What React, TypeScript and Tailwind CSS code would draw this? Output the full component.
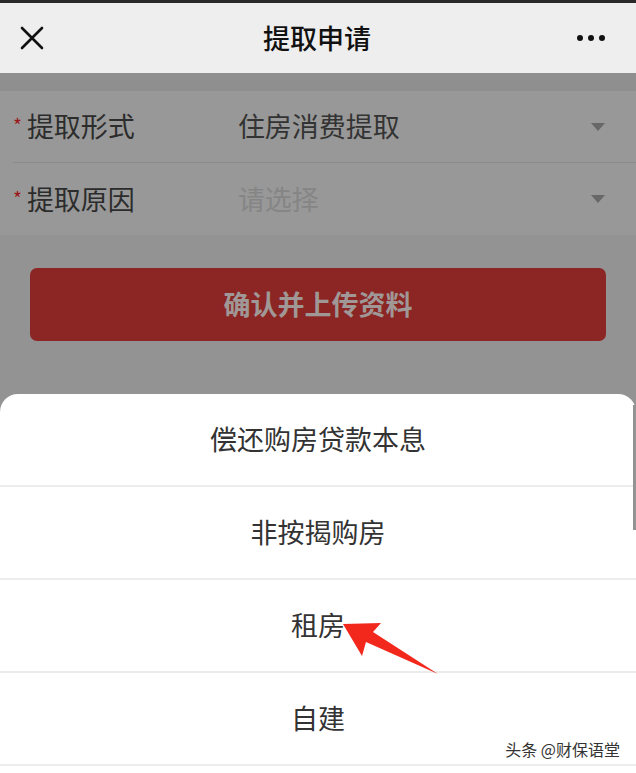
import React from "react";

const font = {
  fontFamily: '"Noto Sans CJK SC", "Noto Sans", sans-serif',
};

const reasons = ["偿还购房贷款本息", "非按揭购房", "租房", "自建"];

const Caret = () => (
  <svg width="16" height="10" viewBox="0 0 16 10" className="mr-[30px]">
    <path d="M1 1h14L8 9z" fill="#686868" />
  </svg>
);

const FormRow = ({
  label,
  value,
  placeholder,
  last,
}: {
  label: string;
  value: string;
  placeholder?: boolean;
  last?: boolean;
}) => (
  <div className="flex h-[72px] items-center pl-[13px]">
    <div
      className={`flex h-full flex-1 items-center ${
        last ? "" : "border-b border-[#8a8a8a]"
      }`}
    >
      <span className="mr-[5px] mt-[-2px] text-[19px] text-[#9a1a1a]">*</span>
      <span className="w-[211px] text-[27px] text-[#2c2c2c]">{label}</span>
      <span
        className={`flex-1 text-[27px] ${
          placeholder ? "text-[#858585]" : "text-[#333333]"
        }`}
      >
        {value}
      </span>
      <Caret />
    </div>
  </div>
);

export default function App() {
  return (
    <div
      className="relative flex h-[773px] w-[636px] flex-col overflow-hidden bg-[#939393]"
      style={font}
    >
      {/* navigation bar */}
      <header className="flex h-[73px] shrink-0 items-center justify-between border-t-[3px] border-[#2a2a2a] bg-[#eeeeee] px-[20px]">
        <svg width="24" height="24" viewBox="0 0 24 24">
          <path
            d="M2 2L22 22M22 2L2 22"
            stroke="#111"
            strokeWidth="2.6"
            strokeLinecap="round"
          />
        </svg>
        <h1 className="ml-[14px] text-[27px] font-medium text-[#111]">提取申请</h1>
        <svg width="30" height="8" viewBox="0 0 30 8" className="mr-[10px]">
          <circle cx="4" cy="4" r="3" fill="#111" />
          <circle cx="15" cy="4" r="3" fill="#111" />
          <circle cx="26" cy="4" r="3" fill="#111" />
        </svg>
      </header>

      <div className="h-[18px] shrink-0 bg-[#8f8f8f]" />

      <section className="shrink-0 bg-[#989898]">
        <FormRow label="提取形式" value="住房消费提取" />
        <FormRow label="提取原因" value="请选择" placeholder last />
      </section>

      <div className="px-[30px] pt-[33px]">
        <button className="flex h-[73px] w-full items-center justify-center rounded-[7px] bg-[#8b2624] text-[27px] font-bold text-[#a09896]">
          确认并上传资料
        </button>
      </div>

      {/* bottom sheet */}
      <div className="mt-[53px] flex-1 rounded-t-[18px] bg-white">
        {reasons.map((r) => (
          <div
            key={r}
            className="flex h-[93px] items-center justify-center border-b-2 border-[#ececec] text-[27px] text-[#333333]"
          >
            {r}
          </div>
        ))}
      </div>

      {/* scroll indicator */}
      <div className="absolute right-0 top-[405px] h-[125px] w-[3px] bg-[#939393]" />

      {/* red annotation arrow */}
      <svg
        className="absolute left-0 top-0"
        width="636"
        height="773"
        viewBox="0 0 636 773"
      >
        <polygon
          points="343,624 381,623 373,632 438,674 366,642 362,656"
          fill="#f2281d"
        />
      </svg>

      {/* watermark */}
      <div className="absolute bottom-[12px] right-[16px] text-[16px] text-[#333333]">
        头条 @财保语堂
      </div>
    </div>
  );
}
